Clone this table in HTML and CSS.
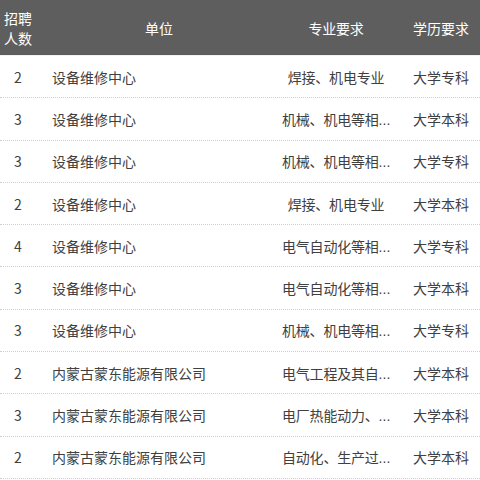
FILE: index.html
```html
<!DOCTYPE html>
<html lang="zh">
<head>
<meta charset="utf-8">
<link rel="stylesheet" href="styles.css">
</head>
<body>
<div class="table">
  <div class="row head">
    <div class="c1 hnum">招聘<br>人数</div>
    <div class="c2 hcenter">单位</div>
    <div class="c3">专业要求</div>
    <div class="c4">学历要求</div>
  </div>
  <div class="row"><div class="c1">2</div><div class="c2">设备维修中心</div><div class="c3">焊接、机电专业</div><div class="c4">大学专科</div></div>
  <div class="row"><div class="c1">3</div><div class="c2">设备维修中心</div><div class="c3">机械、机电等相<span class="dots">...</span></div><div class="c4">大学本科</div></div>
  <div class="row"><div class="c1">3</div><div class="c2">设备维修中心</div><div class="c3">机械、机电等相<span class="dots">...</span></div><div class="c4">大学专科</div></div>
  <div class="row"><div class="c1">2</div><div class="c2">设备维修中心</div><div class="c3">焊接、机电专业</div><div class="c4">大学本科</div></div>
  <div class="row"><div class="c1">4</div><div class="c2">设备维修中心</div><div class="c3">电气自动化等相<span class="dots">...</span></div><div class="c4">大学专科</div></div>
  <div class="row"><div class="c1">3</div><div class="c2">设备维修中心</div><div class="c3">电气自动化等相<span class="dots">...</span></div><div class="c4">大学本科</div></div>
  <div class="row"><div class="c1">3</div><div class="c2">设备维修中心</div><div class="c3">机械、机电等相<span class="dots">...</span></div><div class="c4">大学专科</div></div>
  <div class="row"><div class="c1">2</div><div class="c2">内蒙古蒙东能源有限公司</div><div class="c3">电气工程及其自<span class="dots">...</span></div><div class="c4">大学本科</div></div>
  <div class="row"><div class="c1">3</div><div class="c2">内蒙古蒙东能源有限公司</div><div class="c3">电厂热能动力、<span class="dots">...</span></div><div class="c4">大学本科</div></div>
  <div class="row"><div class="c1">2</div><div class="c2">内蒙古蒙东能源有限公司</div><div class="c3">自动化、生产过<span class="dots">...</span></div><div class="c4">大学本科</div></div>
</div>
</body>
</html>
```
FILE: styles.css
```css
html, body {
  margin: 0;
  padding: 0;
  background: #fff;
}
body {
  font-family: "Noto Sans CJK SC", "Microsoft YaHei", sans-serif;
  font-size: 14px;
  color: #404040;
  overflow: hidden;
}
.table {
  width: 480px;
}
.row {
  display: grid;
  grid-template-columns: 36px 246px 108px 90px;
  align-items: center;
  height: 42.3px;
  box-sizing: border-box;
  border-bottom: 1px dotted #cfcfcf;
}
.row.head {
  height: 56px;
  background: #5e5e5e;
  color: #fff;
  border-bottom: 1px solid #f2f2f2;
  line-height: 20px;
}
.c1 {
  text-align: center;
}
.c2 {
  padding-left: 16px;
  white-space: nowrap;
}
.c2.hcenter {
  padding-left: 0;
  text-align: center;
}
.c3 {
  text-align: center;
  white-space: nowrap;
  letter-spacing: -0.2px;
}
.dots {
  font-family: "Liberation Sans", sans-serif;
  letter-spacing: 0;
}
.c4 {
  padding-left: 12px;
  text-align: center;
  white-space: nowrap;
}
```
